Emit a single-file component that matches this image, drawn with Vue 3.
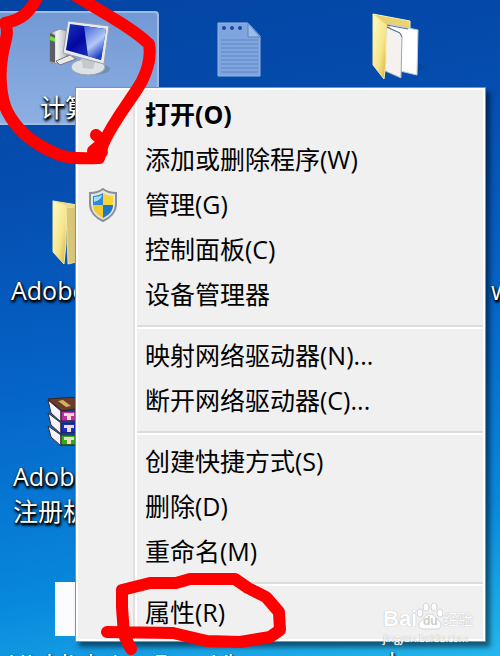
<script setup>
import { ref } from 'vue';

const groups = [
  [
    { id: 'open', label: '打开(O)', bold: true },
    { id: 'programs', label: '添加或删除程序(W)' },
    { id: 'manage', label: '管理(G)', shield: true },
    { id: 'control', label: '控制面板(C)' },
    { id: 'devices', label: '设备管理器' },
  ],
  [
    { id: 'map', label: '映射网络驱动器(N)...' },
    { id: 'unmap', label: '断开网络驱动器(C)...' },
  ],
  [
    { id: 'shortcut', label: '创建快捷方式(S)' },
    { id: 'delete', label: '删除(D)' },
    { id: 'rename', label: '重命名(M)' },
  ],
  [{ id: 'properties', label: '属性(R)' }],
];

const lastAction = ref('');

const runAction = (item) => {
  lastAction.value = item.id;
};
</script>

<template>
  <main class="desktop">
    <!-- Desktop icons -->
    <div class="shortcut computer">
      <svg class="computer-icon" viewBox="0 0 64 60" aria-hidden="true">
        <defs>
          <linearGradient id="screen" x1="0" y1="0" x2="1" y2="1">
            <stop offset="0" stop-color="#1a35b8" />
            <stop offset="0.4" stop-color="#0408a0" />
            <stop offset="1" stop-color="#2a55d8" />
          </linearGradient>
          <linearGradient id="shine" x1="0" y1="0" x2="0.5" y2="1">
            <stop offset="0" stop-color="#3f62d8" />
            <stop offset="0.6" stop-color="#b3c8f5" />
            <stop offset="1" stop-color="#1c3ec4" />
          </linearGradient>
          <linearGradient id="tower" x1="0" y1="0" x2="1" y2="0">
            <stop offset="0" stop-color="#8b8f94" />
            <stop offset="0.4" stop-color="#f4f4f4" />
            <stop offset="1" stop-color="#b4b8bd" />
          </linearGradient>
        </defs>
        <path d="M4 12 L14 8 L21 10 V38 L8 43 L4 41 Z" fill="url(#tower)" stroke="#8a8e94" />
        <path d="M4 12 L9 14 V42 L4 40 Z" fill="#5b5f64" />
        <path d="M4 15 L9 17 V21 L4 19 Z" fill="#6ee03a" />
        <path d="M10 40 L24 34 L30 38 L14 44 Z" fill="#e9e9e9" stroke="#777" />
        <ellipse cx="46" cy="48" rx="18" ry="6" fill="#54708e" opacity="0.4" />
        <ellipse cx="42" cy="46" rx="17" ry="8" fill="#dfe2e5" stroke="#9aa2aa" />
        <path d="M35 36 L50 38 L47 48 L37 47 Z" fill="#c4c9cf" />
        <path d="M22 0 L63 5 L58 43 L17 32 Z" fill="#e8ebee" stroke="#9aa0a8" />
        <path d="M24 3 L60 8 L55 39 L20 29 Z" fill="url(#screen)" />
        <path d="M38 5 L60 8 L55 39 L42 35 Z" fill="url(#shine)" />
      </svg>
      <span class="shortcut-label">计算机</span>
    </div>

    <svg class="shortcut notepad" viewBox="0 0 46 56" aria-hidden="true">
      <path d="M1 1 H31 L43 14 V54 H1 Z" fill="#7fa5dc" stroke="#94b6e6" />
      <path d="M31 1 V15 H43 Z" fill="#9dbbe8" stroke="#5b83c2" />
      <g fill="#134aa5">
        <circle cx="7" cy="6" r="2" />
        <circle cx="15" cy="6" r="2" />
        <circle cx="23" cy="6" r="2" />
      </g>
      <path
        d="M4 18 H41 M4 22 H41 M4 26 H41 M4 30 H41 M4 34 H41 M4 38 H41 M4 42 H41 M4 46 H41 M4 50 H41"
        stroke="#5e88c8"
      />
    </svg>

    <svg class="shortcut folder-open" viewBox="0 0 54 68" aria-hidden="true">
      <defs>
        <linearGradient id="folder" x1="0" y1="0" x2="1" y2="1">
          <stop offset="0" stop-color="#fffbc4" />
          <stop offset="0.6" stop-color="#f5e58b" />
          <stop offset="1" stop-color="#d8ae3c" />
        </linearGradient>
      </defs>
      <path d="M44 60 L54 54 L46 50 Z" fill="#073b83" opacity="0.4" />
      <path d="M1 1 L38 8 V24 L14 30 Z" fill="#e8d273" stroke="#fdf4ad" />
      <path d="M17 11 L46 17 L45 62 L28 58 Z" fill="#fff" stroke="#c3c7cf" />
      <path d="M14 14 L28 20 L30 24 L29 65 L13 58 Z" fill="#f4f1ee" stroke="#9aa5b7" />
      <path d="M15 12 L36 16 M15 14 L28 20 L30 24" fill="none" stroke="#4b7197" />
      <path d="M1 1 L14 12 V48 L12 66 L1 52 Z" fill="url(#folder)" stroke="#f9ec99" />
    </svg>

    <div class="shortcut adobe-folder">
      <svg class="folder-icon" viewBox="0 0 54 68" aria-hidden="true">
        <path d="M1 1 L38 7 V24 L14 30 Z" fill="#eadb8c" stroke="#f2e69c" />
        <path d="M14 8 L40 5 V58 L16 64 Z" fill="#d9c678" stroke="#efe099" />
        <path d="M1 1 L14 6 V44 L12 64 L1 52 Z" fill="url(#folder)" stroke="#f9ec99" />
      </svg>
      <span class="shortcut-label">Adobe</span>
    </div>

    <div class="shortcut adobe-archive">
      <svg class="archive-icon" viewBox="0 0 54 52" aria-hidden="true">
        <path d="M1 2 L30 0 L52 8 L15 14 Z" fill="#6b3b2b" stroke="#3d221a" />
        <path d="M11 4 L16 3 L24 9 L19 10 Z" fill="#d2b15a" />
        <g v-for="(color, idx) in ['#c02ca6', '#1c2cc0', '#35a81c']" :key="color">
          <path
            :d="`M1 ${3 + idx * 13} L14 ${14 + idx * 12} V${25 + idx * 12} L4 ${16 + idx * 12} Z`"
            fill="#f6f4f8"
            stroke="#3b2630"
          />
          <path :d="`M14 ${14 + idx * 12} H52 V${24 + idx * 12} H14 Z`" :fill="color" stroke="#23172e" />
          <path :d="`M17 ${16 + idx * 12} H27 V${19 + idx * 12} H24 V${23 + idx * 12} H20 V${19 + idx * 12} H17 Z`" fill="#f0dccb" />
        </g>
      </svg>
      <span class="shortcut-label">Adobe<br />注册机</span>
    </div>

    <div class="shortcut document">
      <span class="document-icon"></span>
      <span class="shortcut-label">Highlighting Easy Vb</span>
    </div>
    <span class="shortcut shortcut-label edge-right">w</span>
    <span class="shortcut shortcut-label edge-bottom">b</span>

    <!-- Context menu -->
    <nav class="menu" aria-label="计算机">
      <ul v-for="(group, idx) in groups" :key="idx" class="menu-group">
        <li v-for="item in group" :key="item.id">
          <button
            type="button"
            class="menu-item"
            :class="{ bold: item.bold, active: lastAction === item.id }"
            @click="runAction(item)"
          >
            <span class="menu-icon">
              <svg v-if="item.shield" class="shield" viewBox="0 0 30 34" aria-hidden="true">
                <path
                  d="M15 1 C11 4 6 5 2 5 V16 C2 24 8 30 15 33 C22 30 28 24 28 16 V5 C24 5 19 4 15 1 Z"
                  fill="#e3e5e7"
                  stroke="#8b9096"
                  stroke-width="2"
                />
                <path d="M15 5 C12 7 8 8 5 8 V17 H15 Z" fill="#2c8bd8" />
                <path d="M15 5 C18 7 22 8 25 8 V17 H15 Z" fill="#f8d535" />
                <path d="M5 17 H15 V30 C9 27 5 23 5 17 Z" fill="#f3c92c" />
                <path d="M25 17 H15 V30 C21 27 25 23 25 17 Z" fill="#1f77cc" />
                <path d="M6 9 C9 9 12 8 14 7 C13 11 10 13 6 14 Z" fill="#a9dcf6" />
              </svg>
            </span>
            <span class="menu-text">{{ item.label }}</span>
          </button>
        </li>
      </ul>
    </nav>

    <!-- Watermark -->
    <div class="watermark">
      <div class="watermark-row">
        <span class="watermark-name">Bai</span>
        <span class="paw">
          <svg viewBox="0 0 26 28" aria-hidden="true">
            <g fill="#fff" stroke="#d4d4d4">
              <ellipse cx="3" cy="11" rx="3" ry="4" />
              <ellipse cx="9" cy="5" rx="3" ry="4" />
              <ellipse cx="17" cy="5" rx="3" ry="4" />
              <ellipse cx="23" cy="11" rx="3" ry="4" />
              <path d="M13 12 C8 12 8 16 4 19 C0 22 2 28 8 27 H18 C24 28 26 22 22 19 C18 16 18 12 13 12 Z" />
            </g>
          </svg>
          <span class="paw-text">du</span>
        </span>
        <span class="watermark-cn">经验</span>
      </div>
      <span class="watermark-url">jingyan.baidu.com</span>
    </div>

    <!-- Red marker strokes -->
    <svg class="marker marker-top" viewBox="0 0 170 170" aria-hidden="true">
      <path
        d="M38 -4 C30 12 22 20 5 23 C10 34 4 42 2 58 C-1 76 1 98 7 111 C17 131 36 145 55 153 C64 158 80 159 99 158 L103 144 C115 118 132 99 142 81 C149 67 151 55 149 44 C132 28 112 18 76 -4"
      />
      <path d="M96 135 L104 142 L93 151 L102 152" />
    </svg>
    <svg class="marker marker-bottom" viewBox="0 0 190 90" aria-hidden="true">
      <path
        d="M31 80 L24 66 L22 38 L22 21 L50 14 L76 14 L90 10 L135 10 L148 19 L166 28 L179 43 L180 61 L170 68 L140 73 L107 72 L73 64 L7 63"
      />
    </svg>
  </main>
</template>

<style>
body {
  margin: 0;
}
</style>

<style scoped>
.desktop {
  position: relative;
  min-height: 100vh;
  overflow: hidden;
  background: linear-gradient(168deg, #0344a3 0%, #054daf 25%, #0564c8 52%, #0889dd 80%, #25b7ec 100%);
  font-family: "Open Sans", "Noto Sans CJK SC", sans-serif;
}

.shortcut {
  position: absolute;
}

.shortcut-label {
  color: #fff;
  font-size: 25px;
  line-height: 35px;
  white-space: nowrap;
  text-shadow: 1px 2px 3px #000, 1px 2px 3px #000, 0 1px 2px #000;
}

.computer {
  top: 11px;
  left: -4px;
  display: flex;
  flex-direction: column;
  align-items: center;
  gap: 9px;
  box-sizing: border-box;
  width: 163px;
  height: 114px;
  padding-top: 8px;
  border: 2px solid #9fbce6;
  border-radius: 4px;
  background: linear-gradient(#7399d5, #8cb0e2);
}

.computer-icon {
  flex: none;
  width: 64px;
  height: 60px;
}

.notepad {
  top: 22px;
  left: 217px;
  width: 46px;
  height: 56px;
}

.folder-open {
  top: 13px;
  left: 372px;
  width: 54px;
  height: 68px;
}

.adobe-folder {
  top: 200px;
  left: 11px;
  display: flex;
  flex-direction: column;
  gap: 5px;
}

.folder-icon {
  width: 54px;
  height: 68px;
  margin-left: 41px;
}

.adobe-archive {
  top: 397px;
  left: 13px;
  display: flex;
  flex-direction: column;
  gap: 10px;
}

.archive-icon {
  width: 54px;
  height: 52px;
  margin-left: 34px;
}

.document {
  top: 582px;
  left: 8px;
  display: flex;
  flex-direction: column;
  gap: 10px;
}

.document-icon {
  width: 50px;
  height: 54px;
  margin-left: 47px;
  background: #fafcfe;
}

.edge-right {
  top: 273px;
  left: 491px;
}

.edge-bottom {
  top: 644px;
  left: 389px;
}

.menu {
  position: absolute;
  top: 87px;
  left: 75px;
  right: 14px;
  box-sizing: border-box;
  padding: 2px;
  border: 1px solid #8c9096;
  background: linear-gradient(90deg, #f0f0f0 57px, #e0e0e0 57px, #e0e0e0 59px, #fff 59px, #fff 61px, #f0f0f0 61px);
  box-shadow: inset 0 0 0 2px #fff, 4px 5px 5px rgba(0, 0, 0, 0.5);
}

.menu-group {
  margin: 0;
  padding: 2px 0;
  list-style: none;
}

.menu-group + .menu-group {
  margin-left: 59px;
  padding-top: 6px;
  border-top: 2px solid #dcdcdc;
  box-shadow: inset 0 2px 0 #fff;
}

.menu-group:not(:last-child) {
  padding-bottom: 8px;
}

.menu-group:last-child {
  padding-bottom: 4px;
}

.menu-group + .menu-group .menu-item {
  margin-left: -59px;
}

.menu-item {
  display: flex;
  align-items: center;
  height: 45px;
  padding: 0;
  border: 0;
  background: none;
  color: #000;
  font-family: inherit;
  font-size: 25px;
  line-height: 45px;
  white-space: nowrap;
}

.menu-item.bold {
  font-weight: bold;
}

.menu-icon {
  display: flex;
  justify-content: center;
  width: 50px;
}

.menu-text {
  padding-left: 17px;
}

.shield {
  width: 30px;
  height: 34px;
}

.watermark {
  position: absolute;
  top: 601px;
  left: 383px;
  color: #fff;
  text-shadow: 0 0 1px #bbb, 0 0 1px #bbb;
}

.watermark-row {
  display: flex;
  align-items: flex-end;
  height: 29px;
  line-height: 22px;
}

.watermark-name {
  font-family: "Liberation Sans", sans-serif;
  font-size: 22px;
  font-weight: bold;
}

.paw {
  position: relative;
  width: 26px;
  height: 28px;
}

.paw svg {
  display: block;
}

.paw-text {
  position: absolute;
  right: 0;
  bottom: 3px;
  left: 0;
  color: #ccc;
  font-family: "Liberation Sans", sans-serif;
  font-size: 12px;
  font-weight: bold;
  line-height: 12px;
  text-align: center;
  text-shadow: none;
}

.watermark-cn {
  font-size: 15px;
}

.watermark-url {
  display: block;
  padding-top: 2px;
  font-size: 10px;
  line-height: 12px;
}

.marker {
  position: absolute;
  overflow: visible;
  fill: none;
  stroke: #fe0000;
  stroke-width: 12px;
  stroke-linecap: round;
  stroke-linejoin: round;
  pointer-events: none;
}

.marker-top {
  top: 0;
  left: 0;
  width: 170px;
  height: 170px;
}

.marker-bottom {
  top: 569px;
  left: 100px;
  width: 190px;
  height: 90px;
}
</style>
